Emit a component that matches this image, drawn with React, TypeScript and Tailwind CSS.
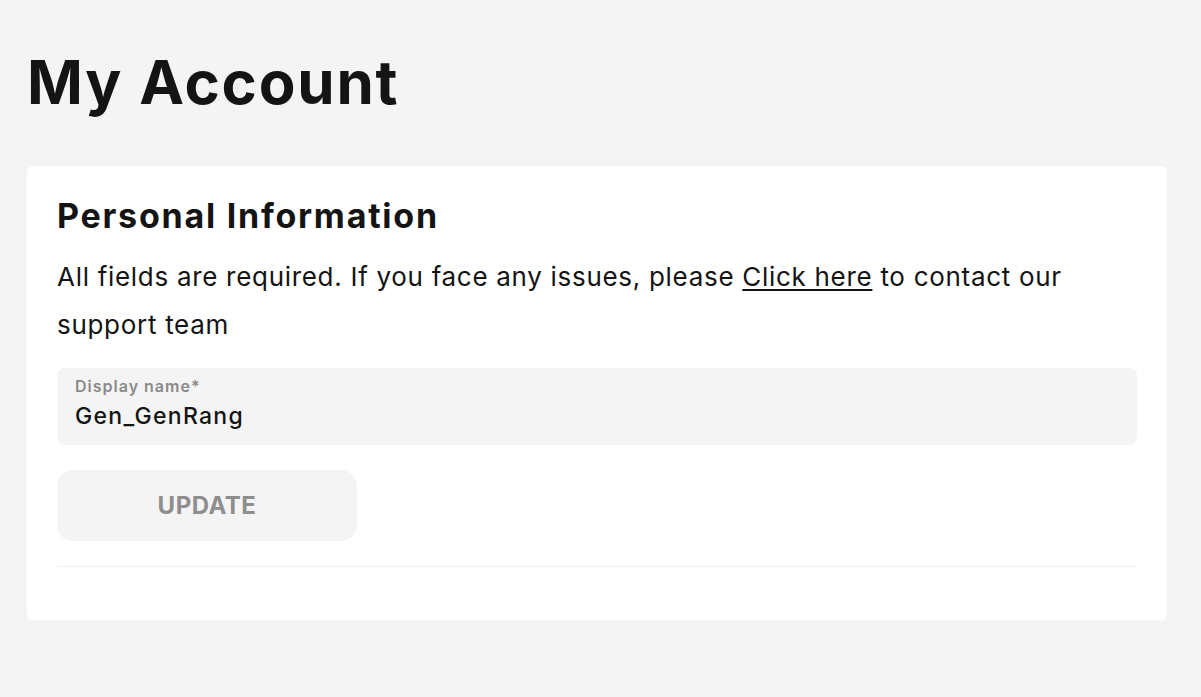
export default function App() {
  return (
    <main className="min-h-[697px] bg-[#f4f4f4] px-[27px] pt-[44px] font-['Inter',sans-serif] text-[#141414]">
      <h1 className="text-[60px] font-bold leading-[76px] tracking-[1.8px]">My Account</h1>
      <section className="mt-[46px] w-[1140px] rounded-[6px] bg-white px-[30px] pt-[28px] pb-[53px]">
        <h2 className="text-[34px] font-bold leading-[44px] tracking-[1.75px]">Personal Information</h2>
        <p className="mt-[15px] text-[26px] leading-[48px] tracking-[0.7px]">
          All fields are required. If you face any issues, please{" "}
          <a href="#" className="underline decoration-[2px] underline-offset-[3px]">Click here</a> to contact our support team
        </p>
        <div className="mt-[19px] flex h-[77px] flex-col rounded-[8px] bg-[#f4f4f4] px-[18px] pt-[8px]">
          <span className="text-[16px] font-semibold leading-[20px] tracking-[1px] text-[#8a8a8a]">Display name*</span>
          <span className="mt-[6px] text-[23px] font-medium leading-[28px] tracking-[1.3px]">Gen_GenRang</span>
        </div>
        <button className="mt-[25px] h-[71px] w-[300px] rounded-[16px] bg-[#f4f4f4] text-[24px] font-bold tracking-[0.5px] text-[#8e8e8e]">
          UPDATE
        </button>
        <div className="mt-[25px] h-px bg-[#f0f0f0]" />
      </section>
    </main>
  )
}
